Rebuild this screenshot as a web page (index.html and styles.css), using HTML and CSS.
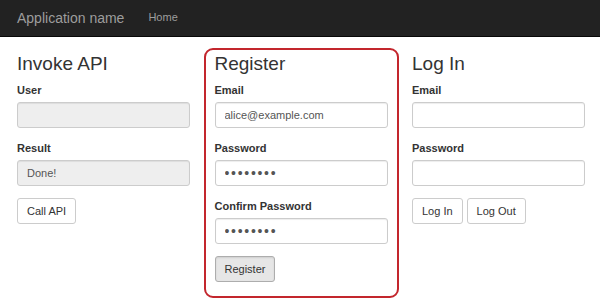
FILE: index.html
```html
<!DOCTYPE html>
<html lang="en">
<head>
<meta charset="utf-8">
<title>Application name</title>
<link rel="stylesheet" href="styles.css">
</head>
<body>
<nav class="navbar">
  <a class="brand" href="#">Application name</a>
  <a class="nav-link" href="#">Home</a>
</nav>
<main class="columns">
  <section class="col">
    <h3>Invoke API</h3>
    <div class="form-group">
      <label>User</label>
      <input class="form-control" type="text" disabled>
    </div>
    <div class="form-group">
      <label>Result</label>
      <input class="form-control" type="text" value="Done!" disabled>
    </div>
    <div class="actions">
      <button class="btn">Call API</button>
    </div>
  </section>
  <section class="col col-highlight">
    <h3>Register</h3>
    <div class="form-group">
      <label>Email</label>
      <input class="form-control" type="text" value="alice@example.com">
    </div>
    <div class="form-group">
      <label>Password</label>
      <input class="form-control pw" type="password" value="password">
    </div>
    <div class="form-group">
      <label>Confirm Password</label>
      <input class="form-control pw" type="password" value="password">
    </div>
    <div class="actions">
      <button class="btn btn-active">Register</button>
    </div>
  </section>
  <section class="col">
    <h3>Log In</h3>
    <div class="form-group">
      <label>Email</label>
      <input class="form-control" type="text">
    </div>
    <div class="form-group">
      <label>Password</label>
      <input class="form-control" type="password">
    </div>
    <div class="actions">
      <button class="btn">Log In</button>
      <button class="btn">Log Out</button>
    </div>
  </section>
</main>
</body>
</html>
```
FILE: styles.css
```css
* { box-sizing: border-box; }
html, body { margin: 0; padding: 0; }
body {
  width: 600px;
  height: 307px;
  overflow: hidden;
  background: #fff;
  font-family: "Liberation Sans", Arial, sans-serif;
  font-size: 11px;
  color: #333;
}
.navbar {
  height: 37px;
  background: #222;
  border-bottom: 1px solid #080808;
  display: flex;
  align-items: center;
  padding-left: 17px;
}
.brand {
  font-size: 14px;
  color: #9d9d9d;
  text-decoration: none;
  margin-right: 24px;
  margin-top: -1px;
}
.nav-link {
  font-size: 11px;
  color: #9d9d9d;
  text-decoration: none;
  margin-top: -2px;
}
.columns {
  display: grid;
  grid-template-columns: repeat(3, 1fr);
  column-gap: 24.5px;
  padding: 16px 15px 0 17px;
}
.col { position: relative; }
.col-highlight::before {
  content: "";
  position: absolute;
  top: -5px;
  left: -11px;
  right: -11px;
  bottom: -16px;
  border: 2px solid #c3262d;
  border-radius: 9px;
  pointer-events: none;
}
h3 {
  margin: 0 0 8px;
  font-size: 19px;
  font-weight: normal;
  line-height: 21px;
  color: #333;
}
.form-group { margin-bottom: 12px; }
label {
  display: block;
  font-weight: bold;
  font-size: 11px;
  line-height: 16px;
  margin-bottom: 4px;
}
.form-control {
  display: block;
  width: 100%;
  height: 26px;
  padding: 0 9px;
  font-family: inherit;
  font-size: 11px;
  color: #555;
  background: #fff;
  border: 1px solid #ccc;
  border-radius: 3px;
  box-shadow: inset 0 1px 1px rgba(0,0,0,.075);
  outline: none;
}
.form-control:disabled {
  background: #eee;
  color: #555;
  opacity: 1;
}
.pw {
  font-size: 14px;
  letter-spacing: 1.7px;
}
.actions {
  display: flex;
  gap: 4px;
}
.btn {
  height: 26px;
  padding: 0 9px;
  font-family: inherit;
  font-size: 11px;
  color: #333;
  background: #fff;
  border: 1px solid #ccc;
  border-radius: 3px;
}
.btn-active {
  background: #e6e6e6;
  border-color: #adadad;
  box-shadow: inset 0 1px 2px rgba(0,0,0,.1);
  width: 60px;
}
```
